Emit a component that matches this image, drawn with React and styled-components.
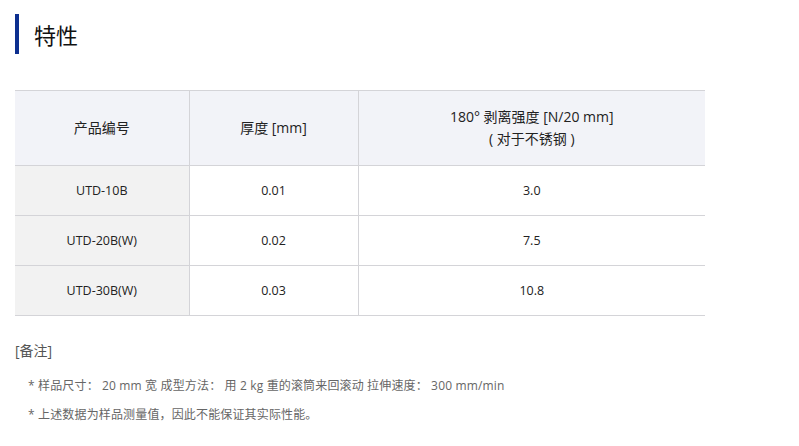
import React from 'react';
import styled, { createGlobalStyle } from 'styled-components';

const Global = createGlobalStyle`
    body {
        margin: 0;
        background: #fff;
        font-family: "Open Sans", "Noto Sans CJK SC", sans-serif;
    }
`;

const rows = [
    { code: 'UTD-10B', thick: '0.01', peel: '3.0' },
    { code: 'UTD-20B(W)', thick: '0.02', peel: '7.5' },
    { code: 'UTD-30B(W)', thick: '0.03', peel: '10.8' },
];

const App = () => {
    return (
        <Wrapper>
            <Global />
            <Title>特性</Title>
            <Table>
                <colgroup>
                    <col style={{ width: 174 }} />
                    <col style={{ width: 169 }} />
                    <col />
                </colgroup>
                <thead>
                    <tr>
                        <Th>产品编号</Th>
                        <Th>厚度 [mm]</Th>
                        <Th>
                            180° 剥离强度 [N/20 mm]
                            <Sub>( 对于不锈钢 )</Sub>
                        </Th>
                    </tr>
                </thead>
                <tbody>
                    {rows.map(r => (
                        <tr key={r.code}>
                            <Td $shaded>{r.code}</Td>
                            <Td>{r.thick}</Td>
                            <Td>{r.peel}</Td>
                        </tr>
                    ))}
                </tbody>
            </Table>
            <Notes>
                <NoteHead>[备注]</NoteHead>
                <Note>* 样品尺寸： 20 mm 宽 成型方法： 用 2 kg 重的滚筒来回滚动 拉伸速度： 300 mm/min</Note>
                <Note>* 上述数据为样品测量值，因此不能保证其实际性能。</Note>
            </Notes>
        </Wrapper>
    );
};

const Wrapper = styled.div`
    padding: 14px 0 0 15px;
    width: 690px;
`;

const Title = styled.h2`
    margin: 0;
    height: 40px;
    border-left: 4px solid #0d2f8f;
    padding-left: 15px;
    font-family: "Noto Sans CJK SC", sans-serif;
    font-weight: 400;
    font-size: 22px;
    line-height: 40px;
    color: #111;
`;

const Table = styled.table`
    margin-top: 36px;
    width: 690px;
    border-collapse: collapse;
    table-layout: fixed;
    border-top: 1px solid #d4d4d8;
    border-bottom: 1px solid #d4d4d8;
`;

const Th = styled.th`
    height: 74px;
    padding: 0;
    background: #f2f3f8;
    font-weight: 400;
    font-size: 14px;
    line-height: 22px;
    color: #222;
    text-align: center;
    border-left: 1px solid #d4d4d8;
    border-bottom: 1px solid #d4d4d8;
    &:first-child {
        border-left: none;
    }
`;

const Sub = styled.div`
    font-size: 14px;
`;

const Td = styled.td`
    height: 49px;
    padding: 0;
    background: ${p => (p.$shaded ? '#f2f2f2' : '#fff')};
    font-size: 12.5px;
    color: #222;
    text-align: center;
    border-left: 1px solid #d4d4d8;
    border-bottom: 1px solid #d4d4d8;
    &:first-child {
        border-left: none;
    }
`;

const Notes = styled.div`
    margin-top: 26px;
    color: #555;
`;

const NoteHead = styled.div`
    font-size: 14px;
    line-height: 18px;
    margin-bottom: 18px;
`;

const Note = styled.div`
    padding-left: 13px;
    font-size: 12px;
    line-height: 16px;
    letter-spacing: 0.15px;
    color: #666;
    & + & {
        margin-top: 13px;
    }
`;

export default App;
